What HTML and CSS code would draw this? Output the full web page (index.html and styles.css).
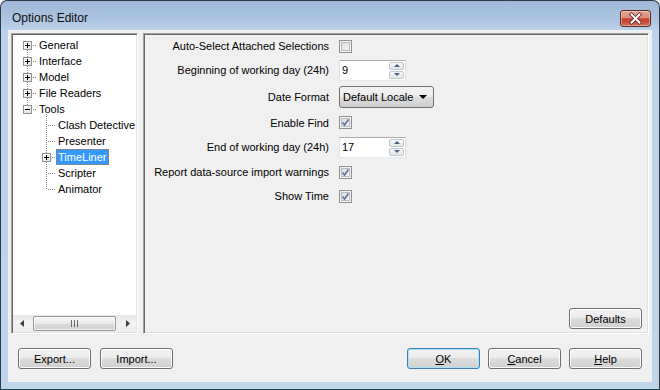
FILE: index.html
```html
<!DOCTYPE html>
<html lang="en">
<head>
    <meta charset="UTF-8">
    <title>Options Editor</title>
    <link rel="stylesheet" href="styles.css">
</head>
<body>
    <div class="window">
        <div class="titlebar">
            <span class="title">Options Editor</span>
            <span class="close">
                <svg width="31" height="17" viewBox="0 0 31 17">
                    <path d="M11.5 4.5 L19.5 12.5 M19.5 4.5 L11.5 12.5" stroke="#5a2620" stroke-width="3.6" stroke-linecap="square"/>
                    <path d="M11.5 4.5 L19.5 12.5 M19.5 4.5 L11.5 12.5" stroke="#ffffff" stroke-width="2" stroke-linecap="square"/>
                </svg>
            </span>
        </div>

        <div class="client">
            <div class="panes">
                <!-- tree of option pages -->
                <div class="tree-pane">
                    <ul class="tree">
                        <li><div class="row"><span class="twist plus"></span><span class="tick"></span><span class="lbl">General</span></div></li>
                        <li><div class="row"><span class="twist plus"></span><span class="tick"></span><span class="lbl">Interface</span></div></li>
                        <li><div class="row"><span class="twist plus"></span><span class="tick"></span><span class="lbl">Model</span></div></li>
                        <li><div class="row"><span class="twist plus"></span><span class="tick"></span><span class="lbl">File Readers</span></div></li>
                        <li>
                            <div class="row"><span class="twist"></span><span class="tick"></span><span class="lbl">Tools</span></div>
                            <ul class="sub">
                                <li><div class="row"><span class="stub"></span><span class="lbl">Clash Detective</span></div></li>
                                <li><div class="row"><span class="stub"></span><span class="lbl">Presenter</span></div></li>
                                <li><div class="row"><span class="twist plus"></span><span class="tick"></span><span class="lbl selected">TimeLiner</span></div></li>
                                <li><div class="row"><span class="stub"></span><span class="lbl">Scripter</span></div></li>
                                <li><div class="row"><span class="stub"></span><span class="lbl">Animator</span></div></li>
                            </ul>
                        </li>
                    </ul>
                    <div class="hscroll">
                        <span class="arr">
                            <svg width="4" height="7" viewBox="0 0 4 7"><path d="M4 0 L0 3.5 L4 7 Z" fill="#3c3c3c"/></svg>
                        </span>
                        <span class="track">
                            <span class="thumb"><span class="grip"></span></span>
                        </span>
                        <span class="arr">
                            <svg width="4" height="7" viewBox="0 0 4 7"><path d="M0 0 L4 3.5 L0 7 Z" fill="#3c3c3c"/></svg>
                        </span>
                    </div>
                </div>

                <!-- properties of the selected page -->
                <div class="props-pane">
                    <div class="props">
                        <label class="plabel">Auto-Select Attached Selections</label>
                        <div class="pval"><span class="check"></span></div>

                        <label class="plabel">Beginning of working day (24h)</label>
                        <div class="pval">
                            <div class="spin">
                                <span class="spin-text">9</span>
                                <span class="spin-btns">
                                    <span class="sbtn"><span class="up"></span></span>
                                    <span class="sbtn"><span class="down"></span></span>
                                </span>
                            </div>
                        </div>

                        <label class="plabel">Date Format</label>
                        <div class="pval">
                            <div class="combo"><span class="combo-text">Default Locale</span><span class="combo-arrow"></span></div>
                        </div>

                        <label class="plabel">Enable Find</label>
                        <div class="pval"><span class="check on"><svg width="11" height="11" viewBox="0 0 11 11"><path d="M2.5 5.5 L4.5 8 L8.5 2.5" fill="none" stroke="#6576a6" stroke-width="1.7"/></svg></span></div>

                        <label class="plabel">End of working day (24h)</label>
                        <div class="pval">
                            <div class="spin">
                                <span class="spin-text">17</span>
                                <span class="spin-btns">
                                    <span class="sbtn"><span class="up"></span></span>
                                    <span class="sbtn"><span class="down"></span></span>
                                </span>
                            </div>
                        </div>

                        <label class="plabel">Report data-source import warnings</label>
                        <div class="pval"><span class="check on"><svg width="11" height="11" viewBox="0 0 11 11"><path d="M2.5 5.5 L4.5 8 L8.5 2.5" fill="none" stroke="#6576a6" stroke-width="1.7"/></svg></span></div>

                        <label class="plabel">Show Time</label>
                        <div class="pval"><span class="check on"><svg width="11" height="11" viewBox="0 0 11 11"><path d="M2.5 5.5 L4.5 8 L8.5 2.5" fill="none" stroke="#6576a6" stroke-width="1.7"/></svg></span></div>
                    </div>
                    <div class="props-foot">
                        <button class="btn">Defaults</button>
                    </div>
                </div>
            </div>

            <div class="actions">
                <button class="btn">Export...</button>
                <button class="btn">Import...</button>
                <span class="spacer"></span>
                <button class="btn default"><u>O</u>K</button>
                <button class="btn"><u>C</u>ancel</button>
                <button class="btn"><u>H</u>elp</button>
            </div>
        </div>
    </div>
</body>
</html>
```

FILE: styles.css
```css
body {
    margin: 0;
    background-color: #f3f3f3;
    font-family: "Liberation Sans", Arial, sans-serif;
    font-size: 11px;
    color: #000;
}
.window {
    width: 660px;
    height: 390px;
    box-sizing: border-box;
    border: 1px solid #2d3b48;
    border-bottom-color: #1d4654;
    border-radius: 7px 7px 0 0;
    background: linear-gradient(#9fb8d5 0px, #abc4df 18px, #bad2eb 29px, #bfd5ec 100%);
    display: flex;
    flex-direction: column;
}

/* title bar */
.titlebar {
    height: 29px;
    display: flex;
    align-items: flex-start;
    flex: none;
}
.title {
    font-size: 12px;
    line-height: 15px;
    margin: 10px 0 0 11px;
    color: #111;
    flex: 1;
}
.close {
    width: 31px;
    height: 17px;
    box-sizing: border-box;
    margin: 9px 8px 0 0;
    border: 1px solid #5b2b26;
    border-radius: 3px;
    background: linear-gradient(#e7a797 0%, #d88b79 45%, #c4422f 52%, #c84c3a 75%, #d7745d 100%);
    box-shadow: inset 0 0 0 1px rgba(255, 220, 210, 0.45);
    position: relative;
}
.close svg {
    position: absolute;
    left: -1px;
    top: -1px;
}

/* client area */
.client {
    flex: 1;
    margin: 0 7px 7px 7px;
    background-color: #f0f0f0;
    padding: 3px 3px 0 3px;
    display: flex;
    flex-direction: column;
}
.panes {
    height: 301px;
    display: flex;
    gap: 5px;
}
.tree-pane, .props-pane {
    box-sizing: border-box;
    border: 1px solid;
    border-color: #a0a0a0 #ffffff #ffffff #a0a0a0;
    box-shadow: inset 1px 1px 0 #696969, inset -1px -1px 0 #e3e3e3;
    padding: 1px;
}
.tree-pane {
    width: 127px;
    background-color: #fff;
    display: flex;
    flex-direction: column;
}
.props-pane {
    flex: 1;
    display: flex;
    flex-direction: column;
}

/* tree */
.tree, .tree ul {
    list-style: none;
    margin: 0;
    padding: 0;
}
.tree {
    flex: 1;
    padding-top: 2px;
}
.tree > li:not(:last-child) > .row .twist::after {
    content: '';
    position: absolute;
    left: 3px;
    top: 8px;
    width: 1px;
    height: 7px;
    background: linear-gradient(#8c8c8c 50%, transparent 50%) 0 0 / 1px 2px repeat-y;
}
.row {
    display: flex;
    align-items: flex-start;
    height: 16px;
}
.twist {
    flex: none;
    width: 9px;
    height: 9px;
    box-sizing: border-box;
    margin: 4px 0 0 10px;
    border: 1px solid #919191;
    position: relative;
    background:
        linear-gradient(#000, #000) center / 5px 1px no-repeat,
        linear-gradient(135deg, #ffffff, #e2e2e2);
}
.twist.plus {
    background:
        linear-gradient(#000, #000) center / 5px 1px no-repeat,
        linear-gradient(#000, #000) center / 1px 5px no-repeat,
        linear-gradient(135deg, #ffffff, #e2e2e2);
}
.tick {
    flex: none;
    width: 5px;
    height: 1px;
    margin-top: 8px;
    background: linear-gradient(to right, #8c8c8c 50%, transparent 50%) 1px 0 / 2px 1px repeat-x;
}
.lbl {
    line-height: 14px;
    height: 14px;
    padding: 0 1px;
    border: 1px solid transparent;
    white-space: nowrap;
}
.lbl.selected {
    background-color: #3399ff;
    color: #fff;
    border: 1px dotted #c0782c;
}
.sub {
    position: relative;
}
.sub::before {
    content: '';
    position: absolute;
    left: 33px;
    top: -3px;
    bottom: 7px;
    width: 1px;
    background: linear-gradient(#8c8c8c 50%, transparent 50%) 0 0 / 1px 2px repeat-y;
}
.sub .twist {
    margin-left: 29px;
}
.stub {
    flex: none;
    width: 14px;
    height: 1px;
    margin: 8px 0 0 29px;
    background: linear-gradient(to right, #8c8c8c 50%, transparent 50%) 0 0 / 2px 1px repeat-x;
    background-clip: content-box;
    padding-left: 5px;
    box-sizing: border-box;
}

/* horizontal scrollbar */
.hscroll {
    height: 17px;
    display: flex;
    background: linear-gradient(#e6e6e6, #f2f2f2 40%, #ededed);
}
.arr {
    width: 17px;
    display: flex;
    align-items: center;
    justify-content: center;
}
.track {
    flex: 1;
    padding: 1px 0 1px 3px;
    display: flex;
}
.thumb {
    width: 83px;
    box-sizing: border-box;
    border: 1px solid #979797;
    border-radius: 2px;
    background: linear-gradient(#f6f6f6, #e9e9e9 50%, #d9d9d9 51%, #d0d0d0);
    box-shadow: inset 0 0 0 1px rgba(255, 255, 255, 0.7);
    display: flex;
    align-items: center;
    justify-content: center;
}
.grip {
    width: 7px;
    height: 7px;
    background: linear-gradient(to right, #6a6a6a 1px, transparent 1px) 0 0 / 3px 7px repeat-x;
}

/* property grid */
.props {
    display: grid;
    grid-template-columns: 184px auto;
    grid-template-rows: 22px 26px 28px 23px 26px 24px 24px;
    column-gap: 10px;
    align-items: center;
}
.plabel {
    text-align: right;
    white-space: nowrap;
}
.pval {
    display: flex;
    align-items: center;
}
.check {
    width: 13px;
    height: 13px;
    box-sizing: border-box;
    border: 1px solid #8e8f8f;
    background: linear-gradient(135deg, #d6d8dc, #f8f8f8);
    box-shadow: inset 0 0 0 1px #f4f4f4, inset 0 0 0 2px #b8bcc3;
    display: flex;
    align-items: center;
    justify-content: center;
}
.spin {
    width: 67px;
    height: 21px;
    box-sizing: border-box;
    border: 1px solid;
    border-color: #abadb3 #dbdfe6 #e3e9ef #e2e3ea;
    background-color: #fff;
    display: flex;
}
.spin-text {
    flex: 1;
    padding-left: 2px;
    line-height: 18px;
}
.spin-btns {
    width: 15px;
    margin: 1px 1px 1px 0;
    display: flex;
    flex-direction: column;
    gap: 1px;
}
.sbtn {
    flex: 1;
    border: 1px solid #c3c7cf;
    border-radius: 2px;
    background: linear-gradient(#f6f6f6, #e3e5e8);
    display: flex;
    align-items: center;
    justify-content: center;
}
.up {
    border: 3px solid transparent;
    border-bottom: 3px solid #4d5f89;
    border-top: 0;
}
.down {
    border: 3px solid transparent;
    border-top: 3px solid #4d5f89;
    border-bottom: 0;
}
.combo {
    width: 95px;
    height: 22px;
    box-sizing: border-box;
    border: 1px solid #707070;
    border-radius: 3px;
    background: linear-gradient(#f2f2f2, #ebebeb 50%, #dddddd 50%, #cfcfcf);
    display: flex;
    align-items: center;
    padding: 0 6px 0 3px;
}
.combo-text {
    flex: 1;
}
.combo-arrow {
    border: 4px solid transparent;
    border-top: 4px solid #000;
    border-bottom: 0;
}
.props-foot {
    margin-top: auto;
    display: flex;
    justify-content: flex-end;
    padding: 0 5px 3px 0;
}

/* buttons */
.btn {
    width: 73px;
    height: 21px;
    box-sizing: border-box;
    font-family: "Liberation Sans", Arial, sans-serif;
    font-size: 11px;
    color: #000;
    border: 1px solid #707070;
    border-radius: 3px;
    background: linear-gradient(#f2f2f2, #ebebeb 50%, #dddddd 50%, #cfcfcf);
    box-shadow: inset 0 0 0 1px #fcfcfc;
    padding: 0;
}
.btn.default {
    border-color: #3c7fb1;
    box-shadow: inset 0 0 0 1px #a6e3fa;
}
.actions {
    flex: 1;
    display: flex;
    align-items: flex-start;
    gap: 8px;
    padding: 14px 7px 0 7px;
}
.actions .btn:nth-child(2) {
    margin-left: 1px;
}
.spacer {
    flex: 1;
}
```
